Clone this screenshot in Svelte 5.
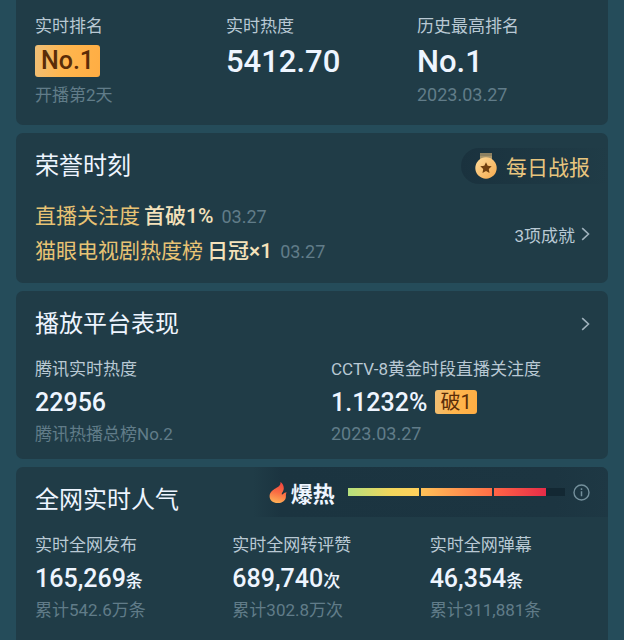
<script lang="ts">
	type Stat = {
		label: string;
		value: string;
		unit?: string;
		note?: string;
		badge?: string;
	};

	const honors = [
		{ name: '直播关注度', result: '首破1%', date: '03.27' },
		{ name: '猫眼电视剧热度榜', result: '日冠×1', date: '03.27' }
	];

	const platforms: Stat[] = [
		{ label: '腾讯实时热度', value: '22956', note: '腾讯热播总榜No.2' },
		{ label: 'CCTV-8黄金时段直播关注度', value: '1.1232%', badge: '破1', note: '2023.03.27' }
	];

	const popularity: Stat[] = [
		{ label: '实时全网发布', value: '165,269', unit: '条', note: '累计542.6万条' },
		{ label: '实时全网转评赞', value: '689,740', unit: '次', note: '累计302.8万次' },
		{ label: '实时全网弹幕', value: '46,354', unit: '条', note: '累计311,881条' }
	];

	const heat = 91;
	const segments = ['warm', 'hot', 'blazing'];

	// share of one meter segment that is filled, in percent
	function fill(index: number) {
		const size = 100 / segments.length;
		return Math.max(0, Math.min(100, ((heat - index * size) / size) * 100));
	}

	const isDate = (text: string) => /^[\d.]+$/.test(text);
</script>

{#snippet chevron()}
	<svg class="chevron" viewBox="0 0 9 14" aria-hidden="true">
		<path d="M1.2 1.2 7.5 7 1.2 12.8" fill="none" stroke="currentColor" stroke-width="1.6" />
	</svg>
{/snippet}

{#snippet stat(item: Stat)}
	<div class="stat">
		<div class="label">{item.label}</div>
		<div class="value">
			<span>{item.value}{#if item.unit}<small>{item.unit}</small>{/if}</span>
			{#if item.badge}<span class="badge small">{item.badge}</span>{/if}
		</div>
		{#if item.note}
			<div class="note" class:date={isDate(item.note)}>{item.note}</div>
		{/if}
	</div>
{/snippet}

<main>
	<section class="card summary">
		<div class="stat">
			<div class="label">实时排名</div>
			<div class="value"><span class="badge">No.1</span></div>
			<div class="note">开播第2天</div>
		</div>
		{@render stat({ label: '实时热度', value: '5412.70' })}
		{@render stat({ label: '历史最高排名', value: 'No.1', note: '2023.03.27' })}
	</section>

	<section class="card">
		<header>
			<h2>荣誉时刻</h2>
			<button class="report">
				<svg class="medal" viewBox="0 0 24 26" aria-hidden="true">
					<defs>
						<linearGradient id="coin" x1="0" y1="0" x2="1" y2="1">
							<stop offset="0" stop-color="#ffdc9b" />
							<stop offset="1" stop-color="#f4a94d" />
						</linearGradient>
					</defs>
					<path d="M6 0h12v6H6z" fill="#8d8161" />
					<path d="M6 3h12v3H6z" fill="#a8956b" />
					<circle cx="12" cy="15" r="10.7" fill="url(#coin)" />
					<path
						d="m12 9.2 1.7 3.6 4 .5-2.9 2.7.7 3.9-3.5-1.9-3.5 1.9.7-3.9-2.9-2.7 4-.5z"
						fill="#71400f"
					/>
				</svg>
				每日战报
			</button>
		</header>
		<div class="honors">
			<ul>
				{#each honors as honor}
					<li>
						<span>{honor.name}</span>
						<strong>{honor.result}</strong>
						<time>{honor.date}</time>
					</li>
				{/each}
			</ul>
			<button class="more">3项成就 {@render chevron()}</button>
		</div>
	</section>

	<section class="card">
		<header>
			<h2>播放平台表现</h2>
			<button class="more" aria-label="播放平台表现">{@render chevron()}</button>
		</header>
		<div class="stats two">
			{#each platforms as item}
				{@render stat(item)}
			{/each}
		</div>
	</section>

	<section class="card last">
		<header>
			<h2>全网实时人气</h2>
			<div class="heat">
				<svg class="flame" viewBox="0 0 18 21" aria-hidden="true">
					<defs>
						<linearGradient id="fire" x1="0.6" y1="0" x2="0.4" y2="1">
							<stop offset="0" stop-color="#f0433e" />
							<stop offset="0.5" stop-color="#fa6c43" />
							<stop offset="1" stop-color="#ffb056" />
						</linearGradient>
					</defs>
					<path
						d="M11.4 0c.5 3-1.3 4.400-4.600 6.200C3 8.300.6 10.600.6 14.200.6 18.200 4 21 8.600 21c4.900 0 8.300-2.600 8.300-6.600 0-1.700.1-2.900.7-4.100-1.500.1-2.600.6-3.500 1.700-.8.8-1.600.4-1.300-.6.4-1.200 2-2.500 2-5.200C14.800 3.500 13.400 1.200 11.400 0z"
						fill="url(#fire)"
					/>
				</svg>
				<strong>爆热</strong>
				<div class="meter" role="meter" aria-label="爆热" aria-valuenow={heat} aria-valuemin="0" aria-valuemax="100">
					{#each segments as name, i}
						<div class="segment">
							<div class="fill {name}" style="width: {fill(i)}%"></div>
						</div>
					{/each}
				</div>
				<button class="info" aria-label="info">
					<svg viewBox="0 0 17 17" aria-hidden="true">
						<circle cx="8.5" cy="8.5" r="7.5" fill="none" stroke="currentColor" stroke-width="1.4" />
						<path d="M8.5 7.2v5M8.5 4.3v1.6" stroke="currentColor" stroke-width="1.5" />
					</svg>
				</button>
			</div>
		</header>
		<div class="stats three">
			{#each popularity as item}
				{@render stat(item)}
			{/each}
		</div>
	</section>
</main>

<style>
	:global(body) {
		background: #254c5a;
	}
	main {
		display: flex;
		flex-direction: column;
		gap: 8px;
		padding: 0 16px;
		font-family: Roboto, 'Noto Sans CJK SC', sans-serif;
		color: #eef5ff;
	}
	.card {
		padding-bottom: 14px;
		border-radius: 7px;
		background: #203c47;
		overflow: hidden;
	}
	.card.last {
		padding-bottom: 19px;
		border-radius: 7px 7px 0 0;
	}
	.summary {
		display: grid;
		grid-template-columns: repeat(3, 1fr);
		padding: 14px 0 19px 19px;
		border-radius: 0 0 7px 7px;
	}
	button {
		display: flex;
		align-items: center;
		padding: 0;
		border: 0;
		background: none;
		color: inherit;
		font: inherit;
		cursor: pointer;
	}
	header {
		display: flex;
		align-items: center;
		justify-content: space-between;
		height: 66px;
		padding-left: 19px;
	}
	h2 {
		margin: 0;
		font-size: 24px;
		font-weight: 400;
		line-height: 36px;
	}
	.stats {
		display: grid;
	}
	.two {
		grid-template-columns: repeat(2, 1fr);
	}
	.three {
		grid-template-columns: repeat(3, 1fr);
	}
	.stats .stat {
		padding-left: 19px;
	}
	.label {
		font-size: 17px;
		line-height: 24px;
		color: #b9c9d4;
		white-space: nowrap;
	}
	.value {
		display: flex;
		align-items: center;
		gap: 8px;
		height: 42px;
		font-size: 25px;
		font-weight: 500;
	}
	.summary .value {
		height: 46px;
		font-size: 31px;
	}
	small {
		font-size: 17px;
	}
	.note {
		font-size: 17px;
		line-height: 22px;
		color: #617c89;
	}
	.note.date {
		font-size: 18px;
	}
	.badge {
		padding: 0 6px;
		border-radius: 3px;
		background: linear-gradient(100deg, #eebf78, #ffb64e 45%, #ffad43);
		color: #5a2c08;
		font-size: 25px;
		line-height: 32px;
	}
	.badge.small {
		padding: 0 5px;
		font-size: 20px;
		font-weight: 400;
		line-height: 24px;
	}
	.report {
		gap: 8px;
		height: 36px;
		padding: 0 18px 0 13px;
		border-radius: 18px 0 0 18px;
		background: linear-gradient(90deg, #1a323e, #203c47);
		color: #e8c57e;
		font-size: 21px;
	}
	.medal {
		width: 24px;
		height: 26px;
	}
	.honors {
		display: flex;
		align-items: center;
		justify-content: space-between;
		padding-left: 19px;
	}
	ul {
		margin: 0;
		padding: 0;
		list-style: none;
	}
	li {
		display: flex;
		gap: 4px;
		font-size: 21px;
		line-height: 35px;
		color: #e8c374;
	}
	li strong {
		font-weight: 500;
		color: #f4e2bb;
	}
	time {
		padding-left: 4px;
		font-size: 18px;
		color: #617c89;
	}
	.more {
		gap: 6px;
		padding-right: 18px;
		font-size: 17px;
		color: #b9c9d4;
	}
	.chevron {
		width: 9px;
		height: 14px;
		color: #9fb1bc;
	}
	.heat {
		display: flex;
		align-items: center;
		align-self: flex-start;
		width: 62%;
		height: 50px;
		padding: 0 18px 0 16px;
		box-sizing: border-box;
		background: linear-gradient(90deg, #203c47, #1b3440 8%, #1c3541 85%, #1e3844);
	}
	.flame {
		width: 18px;
		height: 21px;
		margin-right: 4px;
	}
	.heat strong {
		font-size: 22px;
		font-weight: 700;
	}
	.meter {
		display: flex;
		flex: 1;
		gap: 2px;
		margin: 0 8px 0 13px;
	}
	.segment {
		flex: 1;
		height: 8px;
		background: #132833;
	}
	.fill {
		height: 100%;
	}
	.warm {
		background: linear-gradient(90deg, #b5e07e, #f2d65c 60%, #ffd05c);
	}
	.hot {
		background: linear-gradient(90deg, #ffc258, #ff6e47);
	}
	.blazing {
		background: linear-gradient(90deg, #ff6546, #e62c48);
	}
	.info {
		color: #74909c;
	}
	.info svg {
		width: 17px;
		height: 17px;
	}
</style>
